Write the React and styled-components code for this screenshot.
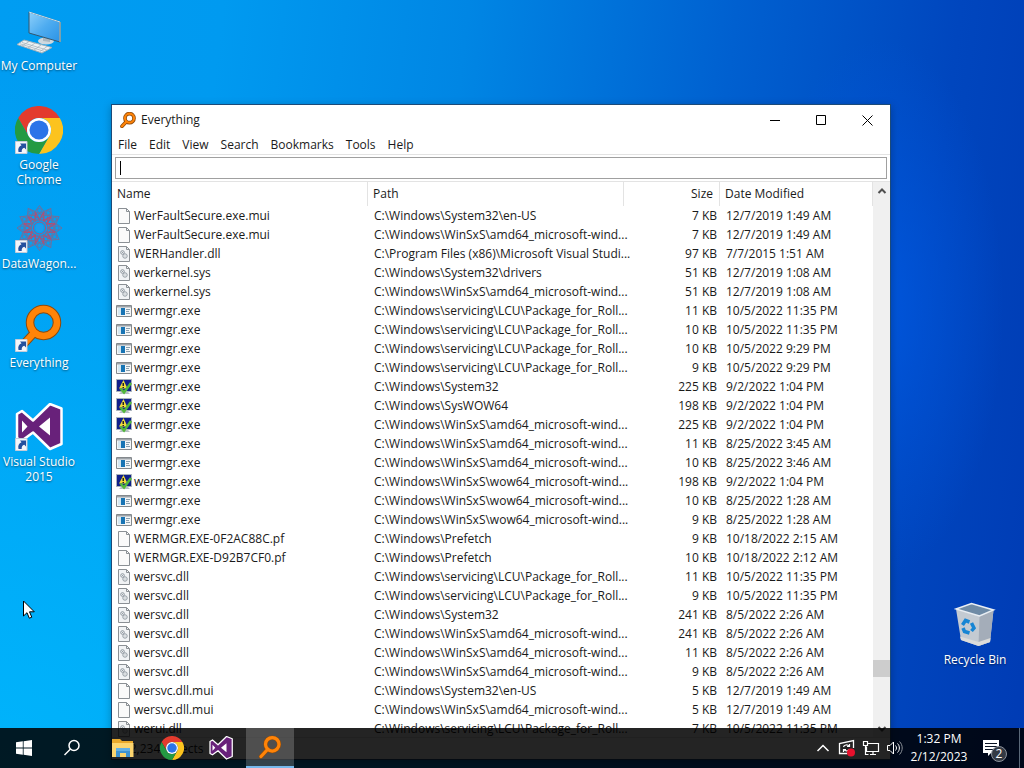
import styled, {createGlobalStyle} from "styled-components";

const uiFont = '"Open Sans", "Noto Sans", sans-serif';
const textColor = '#1a1a1a';
const lineColor = '#e3e3e3';
const taskbarHeight = '40px';

const GlobalStyle = createGlobalStyle`
  * {
    box-sizing: border-box;
  }
  body {
    margin: 0;
    font-family: ${uiFont};
    font-size: 12px;
    line-height: 16px;
  }
  button, input {
    font: inherit;
    color: inherit;
    border: 0;
    padding: 0;
    background: none;
  }
`

/**
 * Desktop
 */

const Screen = styled.div`
  position: relative;
  display: flex;
  flex-direction: column;
  justify-content: space-between;
  height: 100vh;
  overflow: hidden;
  background:
    radial-gradient(ellipse 70% 90% at 0% 100%, rgba(0,188,255,.75), rgba(0,170,255,0) 100%),
    radial-gradient(ellipse 12% 35% at 86% 40%, rgba(0,88,225,.8), rgba(0,80,215,0) 100%),
    linear-gradient(97deg, #009df2 0%, #009af0 20%, #0086e4 42%, #0060d0 66%, #0046be 86%, #003bb4 100%);
`

const IconGrid = styled.main`
  display: grid;
  grid-template-columns: 78px 78px;
  grid-template-rows: repeat(7, 99px);
  justify-content: space-between;
  padding: 7px 10px 0 0;
`

const Shortcut = styled.a`
  grid-column: ${({side}) => side === 'right' ? 2 : 1};
  grid-row: ${({row}) => row};
  display: flex;
  flex-direction: column;
  align-items: center;
  gap: 3px;
  color: #fff;
  line-height: 15px;
  text-align: center;
  text-decoration: none;
  text-shadow: 0 1px 2px rgba(0,0,0,.5);
`

const Pointer = styled.svg`
  position: absolute;
  left: 22px;
  top: 600px;
  z-index: 3;
`

/**
 * Window
 */

const Window = styled.section`
  position: absolute;
  top: 104px;
  right: 133px;
  bottom: 8px;
  left: 111px;
  display: flex;
  flex-direction: column;
  color: ${textColor};
  background-color: #fff;
  border: 1px solid #1c4a78;
  box-shadow: 0 2px 8px rgba(0,0,0,.25);
`

const TitleBar = styled.header`
  display: flex;
  align-items: center;
  height: 30px;
  padding-left: 8px;
`

const Title = styled.h1`
  flex: 1;
  margin: 0 0 0 5px;
  font-size: 12px;
  font-weight: 400;
`

const CaptionButton = styled.button`
  display: grid;
  place-items: center;
  width: 46px;
  height: 30px;
`

const MenuBar = styled.nav`
  display: flex;
  height: 20px;
  border-bottom: 1px solid ${lineColor};
`

const MenuItem = styled.button`
  padding: 0 6px;
`

const SearchRow = styled.div`
  padding: 2px 3px;
  border-bottom: 1px solid ${lineColor};
`

const SearchBox = styled.label`
  display: flex;
  align-items: center;
  height: 22px;
  padding-left: 4px;
  border: 1px solid #a0a0a0;
`

const Caret = styled.span`
  width: 1px;
  height: 14px;
  background-color: #000;
`

const SearchInput = styled.input`
  flex: 1;
  min-width: 0;
  outline: 0;
`

const ListArea = styled.div`
  flex: 1;
  display: flex;
  min-height: 0;
`

const TableClip = styled.div`
  flex: 1;
  min-width: 0;
  overflow: hidden;
`

const FileTable = styled.table`
  width: 100%;
  table-layout: fixed;
  border-collapse: separate;
  border-spacing: 0;
  white-space: nowrap;
`

const HeadCell = styled.th`
  width: ${({width}) => width};
  height: 24px;
  padding: 0 6px 0 5px;
  border-right: 1px solid ${lineColor};
  font-weight: 400;
  text-align: ${({align}) => align || 'left'};
`

const Cell = styled.td`
  height: 19px;
  padding: ${({align}) => align === 'right' ? '0 3px 0 0' : '0 0 0 6px'};
  text-align: ${({align}) => align || 'left'};
`

const FileName = styled.div`
  display: flex;
  align-items: center;
  gap: 2px;
  height: 19px;
  margin-left: -2px;
`

const ScrollBar = styled.div`
  display: flex;
  flex-direction: column;
  width: 17px;
  background-color: #f0f0f0;
`

const ScrollButton = styled.button`
  display: grid;
  place-items: center;
  height: 17px;
`

const ScrollTrack = styled.div`
  flex: 1;
  display: flex;
  flex-direction: column;
  justify-content: flex-end;
  padding-bottom: 43px;
`

const ScrollThumb = styled.div`
  height: 17px;
  background-color: #cdcdcd;
`

const StatusBar = styled.footer`
  height: 22px;
  padding: 3px 4px;
  border-top: 1px solid ${lineColor};
`

/**
 * Taskbar
 */

const Taskbar = styled.footer`
  position: relative;
  z-index: 2;
  display: flex;
  height: ${taskbarHeight};
  color: #fff;
  background-color: rgba(0,0,0,.86);
`

const TaskButton = styled.button`
  display: grid;
  place-items: center;
  width: 48px;
  height: ${taskbarHeight};
  background-color: ${({active}) => active ? 'rgba(255,255,255,.2)' : 'transparent'};
  border-bottom: ${({active}) => active ? '2px solid #76b9ed' : '0'};
`

const TaskList = styled.div`
  flex: 1;
  display: flex;
  gap: 1px;
  padding-left: 3px;
`

const TrayButton = styled.button`
  display: grid;
  place-items: center;
  width: 24px;
`

const Clock = styled.button`
  width: 64px;
  line-height: 18px;
  text-align: center;
`

const ShowDesktop = styled.button`
  width: 5px;
  border-left: 1px solid #5a6878;
`

/**
 * Icons
 */

const LinkArrow = () => (
  <g>
    <path d="M.5 35.500h11.500v12H.5z" fill="#f4f6fa" stroke="#c4ccd8"/>
    <path d="M3.500 46c-.8-3.500.4-6 3-6.800L5 37.500h6v6l-1.700-1.700c-2 .5-2.800 1.900-2.600 4.200z" fill="#24509e"/>
  </g>
)

const ComputerIcon = () => (
  <svg width="48" height="48" viewBox="0 0 48 48" aria-hidden="true">
    <defs>
      <linearGradient id="glass" x1="0" y1="0" x2="1" y2="1">
        <stop offset="0" stopColor="#8fd0fa"/>
        <stop offset=".5" stopColor="#4eacf0"/>
        <stop offset="1" stopColor="#2b93e6"/>
      </linearGradient>
    </defs>
    <ellipse cx="31" cy="34" rx="8" ry="3.500" fill="#cfd8de"/>
    <path d="M28 28l7 2v5l-7-1z" fill="#a9b6bf"/>
    <path d="M14 5l31 10v20l-31-9z" fill="url(#glass)" stroke="#34566e"/>
    <path d="M14 5l31 10" stroke="#c9e3f2"/>
    <path d="M45 15v20" stroke="#d9c9ae"/>
    <path d="M9 33l28 7.500-10 5.500L2 37.500z" fill="#eef1f3" stroke="#9fb0bb"/>
    <path d="M7 35.500l25 7.500M5 36.800l24 7.500M14 34.500l-7 4.500M20 36l-7 5M26 38l-7 5M32 39.500l-7 5" stroke="#9fadb8" strokeWidth=".7"/>
  </svg>
)

const ChromeIcon = ({size, link}) => (
  <svg width={size} height={size} viewBox="0 0 48 48" aria-hidden="true">
    <path d="M24 12h20.800A24 24 0 0 0 3.200 12l10.400 18A12 12 0 0 1 24 12z" fill="#e33b2e"/>
    <path d="M34.400 30L24 48a24 24 0 0 0 20.800-36H24a12 12 0 0 1 10.400 18z" fill="#fcc31e"/>
    <path d="M13.600 30L3.200 12A24 24 0 0 0 24 48l10.400-18a12 12 0 0 1-20.800 0z" fill="#249a42"/>
    <circle cx="24" cy="24" r="12" fill="#fff"/>
    <circle cx="24" cy="24" r="9.500" fill="#2b74e8"/>
    {link && <LinkArrow/>}
  </svg>
)

const WagonIcon = () => (
  <svg width="48" height="48" viewBox="0 0 48 48" fill="none" aria-hidden="true">
    {[0, 30, 60, 90, 120, 150].map(angle => (
      <g key={angle} transform={`rotate(${angle} 24.500 23)`} strokeWidth="1">
        <path d="M2 23L13 15h23l11 8-11 8H13z" stroke="#6f6f9c"/>
        <path d="M9 19l7 4-7 4M40 19l-7 4 7 4" stroke="#a8527a" strokeWidth="1.500"/>
        <circle cx="42" cy="23" r="2" stroke="#5b78ac"/>
        <circle cx="7" cy="23" r="2" stroke="#5b78ac"/>
      </g>
    ))}
    <circle cx="24.500" cy="23" r="6" stroke="#a8527a"/>
    <circle cx="24.500" cy="23" r="4" fill="#1c9cec"/>
    <LinkArrow/>
  </svg>
)

const EverythingIcon = ({size, link, outline = 8.500}) => (
  <svg width={size} height={size} viewBox="0 0 48 48" fill="none" aria-hidden="true">
    <path d="M18 30L6 43" stroke="#8e4a0c" strokeWidth={outline} strokeLinecap="round"/>
    <circle cx="28.500" cy="18.500" r="13.500" stroke="#8e4a0c" strokeWidth={outline}/>
    <path d="M19 29L6 43" stroke="#ff8408" strokeWidth="6.500" strokeLinecap="round"/>
    <circle cx="28.500" cy="18.500" r="13.500" stroke="#ff8408" strokeWidth="6.500"/>
    {link && <LinkArrow/>}
  </svg>
)

const StudioIcon = ({size, link}) => (
  <svg width={size} height={size} viewBox="0 0 48 48" aria-hidden="true">
    <path
      d="M35 1l11.500 4.500v35.500L35 46 18 29.500 7 37.500 2 35V11l5-3 11 9.500z"
      fill="#68217a" stroke="#fff" strokeWidth="2.500" strokeLinejoin="round"
    />
    <path d="M7 17.500v12l5.500-6zM35 14.500v18l-11-9z" fill="#fff"/>
    {link && <LinkArrow/>}
  </svg>
)

const RecycleIcon = () => (
  <svg width="48" height="48" viewBox="0 0 48 48" aria-hidden="true">
    <path d="M5 8l5 31 17.500 6L39 41l3.500-32-14 6z" fill="#c3cad2"/>
    <path d="M28.500 15l14-6L39 41l-11.500 4z" fill="#a4adb9"/>
    <path d="M5 8l15.500-5.500L42.500 9l-14 6z" fill="#6f8ba6" stroke="#e9eef3" strokeWidth="1.500"/>
    <path d="M9 35.500l18.500 5.500L39.500 37 39 41l-11.500 4L10 39z" fill="#dcdcda"/>
    <g fill="none" stroke="#1685d4" strokeWidth="3.500">
      <path d="M11.500 24l3-4.500 4 1.500"/>
      <path d="M20.500 22l2.500 5-2.500 3"/>
      <path d="M18.500 32l-5-1.500-1.500-3.500"/>
    </g>
  </svg>
)

const FolderIcon = () => (
  <svg width="22" height="20" viewBox="0 0 22 20" aria-hidden="true">
    <path d="M0 1h8l2 2h11v16H0z" fill="#e9a92c"/>
    <path d="M0 5h21.500v14H0z" fill="#fcd56f"/>
    <path d="M4 10h14v9h-4v-4H8v4H4z" fill="#3f93d2"/>
    <path d="M4 10h14v3H4z" fill="#62b0e6"/>
  </svg>
)

const FileIcon = ({kind}) => {
  if (kind === 'app') {
    return (
      <svg width="16" height="16" viewBox="0 0 16 16" aria-hidden="true">
        <path d="M.5 2.500h15v11H.5z" fill="#f4f6f7" stroke="#84898d"/>
        <path d="M1 3h14v1.500H1z" fill="#9da3a8"/>
        <path d="M2 5h3v7H2z" fill="#d5e8f2"/>
        <path d="M5 5h4v7H5z" fill="#1874b4"/>
        <path d="M10 6.500h4M10 8.500h3M10 10.500h4" stroke="#8aa0ae"/>
      </svg>
    )
  }

  if (kind === 'report') {
    return (
      <svg width="16" height="16" viewBox="0 0 16 16" aria-hidden="true">
        <path d="M.5.5h15v12H.5z" fill="#10208c" stroke="#aab4bb"/>
        <path d="M3 15l3-3h5l3 3z" fill="#b7c0c4"/>
        <path d="M7.500 1L3 9.500h8.500z" fill="#f0dc3a"/>
        <path d="M6.500 4H8v3H6.500zM6.500 8H8v1H6.500z" fill="#222"/>
        <path d="M4.500 9.500L8 13.500 15 4" fill="none" stroke="#52b83c" strokeWidth="2.500"/>
      </svg>
    )
  }

  return (
    <svg width="16" height="16" viewBox="0 0 16 16" fill="none" aria-hidden="true">
      <path d="M2.500.5h8l3 3v12h-11z" fill={kind === 'system' ? '#f1f3f5' : '#fafafa'} stroke="#8b9095"/>
      <path d="M10.500.5v3h3" stroke="#8b9095"/>
      {kind === 'system' && <>
        <circle cx="6.500" cy="6.500" r="1.800" stroke="#8c959d"/>
        <circle cx="9" cy="10" r="2.200" stroke="#929ba3"/>
        <path d="M9 9.500v1M6.500 6v1" stroke="#929ba3"/>
      </>}
    </svg>
  )
}

const Chevron = ({down}) => (
  <svg width="10" height="8" viewBox="0 0 10 8" fill="none" aria-hidden="true">
    <path d={down ? 'M1.500 2L5 5.500 8.500 2' : 'M1.500 6L5 2.500 8.500 6'} stroke="#505050" strokeWidth="2"/>
  </svg>
)

/**
 * Data
 */

const win = 'C:\\Windows\\';
const amd = win + 'WinSxS\\amd64_microsoft-wind...';
const wow = win + 'WinSxS\\wow64_microsoft-wind...';
const lcu = win + 'servicing\\LCU\\Package_for_Roll...';

const menus = ['File', 'Edit', 'View', 'Search', 'Bookmarks', 'Tools', 'Help'];

const files = [
  ['file', 'WerFaultSecure.exe.mui', win + 'System32\\en-US', 7, '12/7/2019 1:49 AM'],
  ['file', 'WerFaultSecure.exe.mui', amd, 7, '12/7/2019 1:49 AM'],
  ['system', 'WERHandler.dll', 'C:\\Program Files (x86)\\Microsoft Visual Studi...', 97, '7/7/2015 1:51 AM'],
  ['system', 'werkernel.sys', win + 'System32\\drivers', 51, '12/7/2019 1:08 AM'],
  ['system', 'werkernel.sys', amd, 51, '12/7/2019 1:08 AM'],
  ['app', 'wermgr.exe', lcu, 11, '10/5/2022 11:35 PM'],
  ['app', 'wermgr.exe', lcu, 10, '10/5/2022 11:35 PM'],
  ['app', 'wermgr.exe', lcu, 10, '10/5/2022 9:29 PM'],
  ['app', 'wermgr.exe', lcu, 9, '10/5/2022 9:29 PM'],
  ['report', 'wermgr.exe', win + 'System32', 225, '9/2/2022 1:04 PM'],
  ['report', 'wermgr.exe', win + 'SysWOW64', 198, '9/2/2022 1:04 PM'],
  ['report', 'wermgr.exe', amd, 225, '9/2/2022 1:04 PM'],
  ['app', 'wermgr.exe', amd, 11, '8/25/2022 3:45 AM'],
  ['app', 'wermgr.exe', amd, 10, '8/25/2022 3:46 AM'],
  ['report', 'wermgr.exe', wow, 198, '9/2/2022 1:04 PM'],
  ['app', 'wermgr.exe', wow, 10, '8/25/2022 1:28 AM'],
  ['app', 'wermgr.exe', wow, 9, '8/25/2022 1:28 AM'],
  ['file', 'WERMGR.EXE-0F2AC88C.pf', win + 'Prefetch', 9, '10/18/2022 2:15 AM'],
  ['file', 'WERMGR.EXE-D92B7CF0.pf', win + 'Prefetch', 10, '10/18/2022 2:12 AM'],
  ['system', 'wersvc.dll', lcu, 11, '10/5/2022 11:35 PM'],
  ['system', 'wersvc.dll', lcu, 9, '10/5/2022 11:35 PM'],
  ['system', 'wersvc.dll', win + 'System32', 241, '8/5/2022 2:26 AM'],
  ['system', 'wersvc.dll', amd, 241, '8/5/2022 2:26 AM'],
  ['system', 'wersvc.dll', amd, 11, '8/5/2022 2:26 AM'],
  ['system', 'wersvc.dll', amd, 9, '8/5/2022 2:26 AM'],
  ['file', 'wersvc.dll.mui', win + 'System32\\en-US', 5, '12/7/2019 1:49 AM'],
  ['file', 'wersvc.dll.mui', amd, 5, '12/7/2019 1:49 AM'],
  ['system', 'werui.dll', lcu, 7, '10/5/2022 11:35 PM'],
];

/**
 * Components
 */

const EverythingWindow = () => (
  <Window>
    <TitleBar>
      <EverythingIcon size={16} outline={11}/>
      <Title>Everything</Title>
      <CaptionButton aria-label="Minimize">
        <svg width="11" height="11"><path d="M0 5.500h10" stroke="#000"/></svg>
      </CaptionButton>
      <CaptionButton aria-label="Maximize">
        <svg width="11" height="11" fill="none"><path d="M.5.5h9v9h-9z" stroke="#000"/></svg>
      </CaptionButton>
      <CaptionButton aria-label="Close">
        <svg width="11" height="11"><path d="M.5.5l10 10M10.500.5l-10 10" stroke="#000"/></svg>
      </CaptionButton>
    </TitleBar>
    <MenuBar>
      {menus.map(name => <MenuItem key={name}>{name}</MenuItem>)}
    </MenuBar>
    <SearchRow>
      <SearchBox>
        <Caret/>
        <SearchInput type="text" aria-label="Search"/>
      </SearchBox>
    </SearchRow>
    <ListArea>
      <TableClip>
        <FileTable>
          <thead>
            <tr>
              <HeadCell width="256px">Name</HeadCell>
              <HeadCell width="256px">Path</HeadCell>
              <HeadCell width="96px" align="right">Size</HeadCell>
              <HeadCell>Date Modified</HeadCell>
            </tr>
          </thead>
          <tbody>
            {files.map(([kind, name, path, size, date], i) => (
              <tr key={i}>
                <Cell><FileName><FileIcon kind={kind}/>{name}</FileName></Cell>
                <Cell>{path}</Cell>
                <Cell align="right">{size} KB</Cell>
                <Cell>{date}</Cell>
              </tr>
            ))}
          </tbody>
        </FileTable>
      </TableClip>
      <ScrollBar>
        <ScrollButton aria-label="Scroll up"><Chevron/></ScrollButton>
        <ScrollTrack><ScrollThumb/></ScrollTrack>
        <ScrollButton aria-label="Scroll down"><Chevron down/></ScrollButton>
      </ScrollBar>
    </ListArea>
    <StatusBar>132,234 objects</StatusBar>
  </Window>
)

const SystemTray = () => (
  <>
    <TrayButton aria-label="Show hidden icons">
      <svg width="14" height="10" fill="none"><path d="M1.500 8L7 2.500 12.500 8" stroke="#fff" strokeWidth="1.500"/></svg>
    </TrayButton>
    <TrayButton aria-label="Updates">
      <svg width="18" height="18" fill="none" stroke="#fff">
        <path d="M15.500 9V1.500l-14 3v10h8" strokeWidth="1.300"/>
        <path d="M5.500 8c.5-2 4-3 5.500-.8M11.500 5v2.500H9M11.500 10c-.8 2-4 2.600-5.500.7M5.500 13v-2.500H8" strokeWidth="1.200"/>
        <circle cx="13" cy="13.500" r="4" fill="#e8112d" stroke="none"/>
      </svg>
    </TrayButton>
    <TrayButton aria-label="Network">
      <svg width="18" height="16" fill="none" stroke="#fff">
        <path d="M6 3.500h10.500v8H4.500v-5M8 14.500h6M11 11.500v3M1.500 1.500h4v4h-4zM3.500 5.500v9h3" strokeWidth="1.200"/>
      </svg>
    </TrayButton>
    <TrayButton aria-label="Volume">
      <svg width="18" height="16" fill="none" stroke="#fff">
        <path d="M1.500 5.500h2.500l3.500-3.500v12L4 10.500H1.500z"/>
        <path d="M9.500 5.500c1.300 1.500 1.300 3.500 0 5M11.500 3.500c2.500 2.500 2.500 6.500 0 9"/>
        <path d="M13.500 1.500c3.600 3.600 3.600 9.400 0 13" stroke="#8a8f96"/>
      </svg>
    </TrayButton>
    <Clock>1:32 PM<br/>2/12/2023</Clock>
    <TaskButton aria-label="2 new notifications">
      <svg width="28" height="28" viewBox="0 0 28 28">
        <path d="M2 6h16v13h-8l-3 3v-3H2z" fill="#fff"/>
        <path d="M4 9.500h12M4 12.500h12M4 15.500h8" stroke="#0a1424"/>
        <circle cx="18" cy="20" r="7.500" fill="#343a44" stroke="#8b919b"/>
        <text x="18" y="24" fill="#fff" fontSize="12" textAnchor="middle">2</text>
      </svg>
    </TaskButton>
    <ShowDesktop aria-label="Show desktop"/>
  </>
)

export default function App() {
  return (
    <Screen>
      <GlobalStyle/>
      <IconGrid>
        <Shortcut href="#" row={1}><ComputerIcon/>My Computer</Shortcut>
        <Shortcut href="#" row={2}><ChromeIcon size={48} link/>Google<br/>Chrome</Shortcut>
        <Shortcut href="#" row={3}><WagonIcon/>DataWagon...</Shortcut>
        <Shortcut href="#" row={4}><EverythingIcon size={48} link/>Everything</Shortcut>
        <Shortcut href="#" row={5}><StudioIcon size={48} link/>Visual Studio<br/>2015</Shortcut>
        <Shortcut href="#" row={7} side="right"><RecycleIcon/>Recycle Bin</Shortcut>
      </IconGrid>

      <EverythingWindow/>

      <Taskbar>
        <TaskButton aria-label="Start">
          <svg width="16" height="16" fill="#fff">
            <path d="M0 2.300L6.800 1.300v6.300H0zM7.600 1.200L16 0v7.600H7.600zM0 8.400h6.800v6.300L0 13.700zM7.600 8.400H16V16l-8.400-1.200z"/>
          </svg>
        </TaskButton>
        <TaskButton aria-label="Search">
          <svg width="18" height="18" fill="none" stroke="#fff" strokeWidth="1.500">
            <circle cx="11" cy="6.500" r="5"/>
            <path d="M7.500 10L1.500 16"/>
          </svg>
        </TaskButton>
        <TaskList>
          <TaskButton aria-label="File Explorer"><FolderIcon/></TaskButton>
          <TaskButton aria-label="Google Chrome"><ChromeIcon size={24}/></TaskButton>
          <TaskButton aria-label="Visual Studio 2015"><StudioIcon size={24}/></TaskButton>
          <TaskButton aria-label="Everything" active><EverythingIcon size={24}/></TaskButton>
        </TaskList>
        <SystemTray/>
      </Taskbar>

      <Pointer width="14" height="20" viewBox="0 0 14 20" aria-hidden="true">
        <path d="M1.500 1v15l3.500-3.300 2.300 5.500 2.500-1-2.300-5.400h4.800z" fill="#fff" stroke="#000"/>
      </Pointer>
    </Screen>
  )
}
